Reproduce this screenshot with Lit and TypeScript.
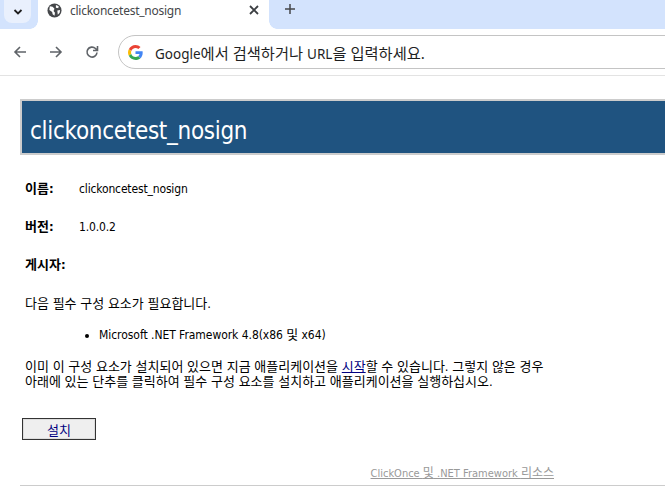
import { LitElement, html, css } from 'lit';
import { customElement } from 'lit/decorators.js';

@customElement('app-root')
export class AppRoot extends LitElement {
  static styles = css`
    :host {
      display: block;
      width: 665px;
      height: 495px;
      overflow: hidden;
      background: #fff;
      font-family: "Noto Sans", "Noto Sans CJK KR", sans-serif;
    }
    .tabstrip {
      display: flex;
      height: 29px;
      background: #d3e3fd;
      align-items: flex-start;
    }
    .tabs-btn {
      width: 27px;
      height: 23px;
      margin-left: 4px;
      border-radius: 0 0 8px 8px;
      background: #e9f0fd;
      display: flex;
      align-items: center;
      justify-content: center;
    }
    .tab {
      position: relative;
      width: 231px;
      height: 29px;
      margin-left: 7px;
      background: #fff;
      display: flex;
      align-items: center;
      box-sizing: border-box;
      padding: 0 0 9px 9px;
      font-size: 12px;
      color: #45474a;
    }
    .tab::before,
    .tab::after {
      content: "";
      position: absolute;
      bottom: 0;
      width: 8px;
      height: 8px;
      background: radial-gradient(circle at 0 0, #d3e3fd 7.5px, #fff 8px);
    }
    .tab::before {
      left: -8px;
    }
    .tab::after {
      right: -8px;
      background: radial-gradient(circle at 100% 0, #d3e3fd 7.5px, #fff 8px);
    }
    .tab-title {
      margin-left: 8px;
      flex: 1;
      white-space: nowrap;
      letter-spacing: -0.25px;
    }
    .tab-close {
      display: flex;
      margin-right: 10px;
    }
    .new-tab {
      display: flex;
      margin: 3px 0 0 15px;
    }
    .toolbar {
      height: 46px;
      display: flex;
      align-items: center;
      border-bottom: 1px solid #e3e3e3;
      padding-left: 12px;
    }
    .nav {
      display: flex;
      width: 36px;
    }
    .nav svg {
      display: block;
    }
    .omnibox {
      flex: 1;
      height: 32px;
      margin-left: -2px;
      margin-right: -30px;
      border: 1px solid #c4c4c4;
      border-radius: 17px;
      display: flex;
      align-items: center;
      padding-left: 9px;
      font-size: 13.5px;
      color: #1f1f1f;
      white-space: nowrap;
    }
    .omnibox svg {
      margin-right: 12px;
      flex: none;
    }
    .omnibox .ko {
      font-size: 15.3px;
    }
    .page {
      padding: 23px 0 0 20px;
      font-family: Tahoma, "DejaVu Sans Condensed", "Noto Sans CJK KR", sans-serif;
      font-size: 12px;
      color: #000;
    }
    .ko {
      font-size: 13px;
    }
    .banner {
      height: 52px;
      border: 2px solid #ccc;
      border-right: none;
      background: #1f5380;
      color: #fff;
      font-size: 24px;
      line-height: 60px;
      letter-spacing: -0.3px;
      padding-left: 8px;
      margin-right: -1px;
      white-space: nowrap;
      overflow: hidden;
    }
    .row {
      display: flex;
      padding-left: 5px;
      height: 38px;
      line-height: 16px;
    }
    .rows {
      padding-top: 26px;
    }
    .row b {
      width: 54px;
      flex: none;
    }
    .row .val {
      letter-spacing: -0.15px;
    }
    p {
      margin: 0;
      padding-left: 5px;
      line-height: 15px;
    }
    .need {
      margin-top: 1px;
    }
    ul {
      margin: 16px 0 0;
      padding-left: 79px;
      line-height: 15px;
      letter-spacing: -0.05px;
    }
    .note {
      margin-top: 16px;
    }
    a {
      color: #000080;
      text-decoration: underline;
    }
    .install {
      display: block;
      margin: 29px 0 0 2px;
      width: 74px;
      height: 22px;
      box-sizing: border-box;
      border: 1px solid #333;
      background: #efefef;
      box-shadow: inset 0 0 0 1px #ddd;
      font: inherit;
      color: #000080;
      padding: 0;
    }
    .links {
      margin-top: 26px;
      width: 534px;
      text-align: right;
      line-height: 15px;
      font-size: 11px;
    }
    .links .ko {
      font-size: 12px;
    }
    .links a {
      color: #999;
    }
    hr {
      margin: 4px 0 0;
      border: none;
      border-top: 1px solid #ccc;
    }
  `;

  render() {
    return html`
      <div class="tabstrip">
        <div class="tabs-btn">
          <svg width="10" height="6" viewBox="0 0 10 6"><path d="M1.5 1l3.5 3.5L8.500 1" fill="none" stroke="#1f1f1f" stroke-width="1.800"/></svg>
        </div>
        <div class="tab">
          <svg width="15" height="15" viewBox="0 0 16 16"><circle cx="8" cy="8" r="7.500" fill="#45474a"/><path d="M3 3.500l3 .5 2 2-1 2.500 1.500 2-.5 3-2-1.500-.5-2.500L2.500 7.500zM9.500 2l3 1.500-.5 2-2.500-.5zM11 8l3-.5-.5 3-2 2z" fill="#fff"/></svg>
          <span class="tab-title">clickoncetest_nosign</span>
          <span class="tab-close">
            <svg width="10" height="10" viewBox="0 0 10 10"><path d="M1 1l8 8M9 1l-8 8" stroke="#3c3f43" stroke-width="1.800"/></svg>
          </span>
        </div>
        <span class="new-tab">
          <svg width="12" height="12" viewBox="0 0 12 12"><path d="M6 1v10M1 6h10" stroke="#45474a" stroke-width="1.500"/></svg>
        </span>
      </div>
      <div class="toolbar">
        <span class="nav">
          <svg width="16" height="16" viewBox="0 0 16 16"><path d="M14 8H3M8 3L3 8l5 5" fill="none" stroke="#5f6368" stroke-width="1.600"/></svg>
        </span>
        <span class="nav">
          <svg width="16" height="16" viewBox="0 0 16 16"><path d="M2 8h11M8 3l5 5-5 5" fill="none" stroke="#5f6368" stroke-width="1.600"/></svg>
        </span>
        <span class="nav">
          <svg width="16" height="16" viewBox="0 0 16 16"><path d="M13 8.500a5 5 0 1 1-1.500-4L13.500 6.500M13.500 2v4.500H9" fill="none" stroke="#5f6368" stroke-width="1.600"/></svg>
        </span>
        <div class="omnibox">
          <svg width="15" height="15" viewBox="0 0 48 48">
            <path fill="#EA4335" d="M24 9.500c3.500 0 6.700 1.200 9.200 3.600l6.900-6.900C35.900 2.400 30.500 0 24 0 14.600 0 6.500 5.400 2.600 13.200l8 6.200C12.400 13.700 17.700 9.500 24 9.500z"/>
            <path fill="#4285F4" d="M46.980 24.550c0-1.570-.15-3.090-.38-4.550H24v9.020h12.940c-.58 2.960-2.260 5.480-4.780 7.180l7.730 6c4.510-4.180 7.090-10.360 7.090-17.650z"/>
            <path fill="#FBBC05" d="M10.530 28.590c-.48-1.450-.76-2.990-.76-4.590s.27-3.140.76-4.590l-7.980-6.190C.92 16.460 0 20.120 0 24c0 3.880.92 7.540 2.560 10.780l7.970-6.190z"/>
            <path fill="#34A853" d="M24 48c6.480 0 11.930-2.130 15.890-5.810l-7.730-6c-2.150 1.450-4.920 2.300-8.160 2.300-6.260 0-11.570-4.220-13.470-9.910l-7.980 6.190C6.510 42.620 14.620 48 24 48z"/>
          </svg>
          <span>Google<span class="ko">에서 검색하거나 </span>URL<span class="ko">을 입력하세요.</span></span>
        </div>
      </div>
      <div class="page">
        <div class="banner">clickoncetest_nosign</div>
        <div class="rows">
          <div class="row"><b class="ko">이름:</b><span class="val">clickoncetest_nosign</span></div>
          <div class="row"><b class="ko">버전:</b><span class="val">1.0.0.2</span></div>
          <div class="row"><b class="ko">게시자:</b></div>
        </div>
        <p class="need ko">다음 필수 구성 요소가 필요합니다.</p>
        <ul><li>Microsoft .NET Framework 4.8(x86 <span class="ko">및</span> x64)</li></ul>
        <p class="note ko">이미 이 구성 요소가 설치되어 있으면 지금 애플리케이션을 <a href="#">시작</a>할 수 있습니다. 그렇지 않은 경우<br />아래에 있는 단추를 클릭하여 필수 구성 요소를 설치하고 애플리케이션을 실행하십시오.</p>
        <button class="install"><span class="ko">설치</span></button>
        <div class="links"><a href="#">ClickOnce <span class="ko">및</span> .NET Framework <span class="ko">리소스</span></a></div>
        <hr />
      </div>
    `;
  }
}

declare global {
  interface HTMLElementTagNameMap {
    'app-root': AppRoot
  }
}
